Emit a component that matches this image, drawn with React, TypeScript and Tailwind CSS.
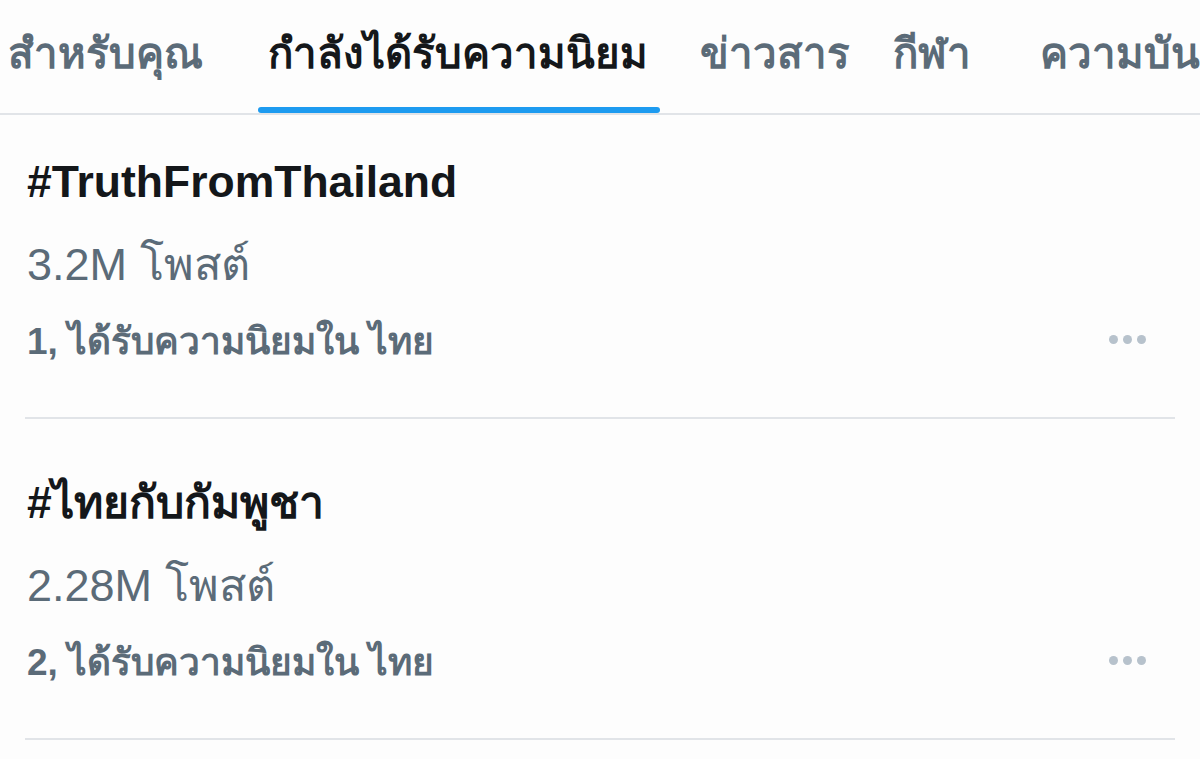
const tabs = [
  { label: 'สำหรับคุณ', active: false, box: 'w-[258px] pl-[8px]' },
  { label: 'กำลังได้รับความนิยม', active: true, box: 'w-[402px] pl-[10px]' },
  { label: 'ข่าวสาร', active: false, box: 'w-[233px] pl-[40px]' },
  { label: 'กีฬา', active: false, box: 'w-[147px]' },
  { label: 'ความบันเทิง', active: false, box: 'w-[200px]' },
];

const trends = [
  { rank: 1, tag: '#TruthFromThailand', count: '3.2M' },
  { rank: 2, tag: '#ไทยกับกัมพูชา', count: '2.28M' },
];

function MoreDots() {
  return (
    <div className="flex items-center gap-[5px]">
      <span className="h-[9px] w-[9px] rounded-full bg-[#b7c2cc]" />
      <span className="h-[9px] w-[9px] rounded-full bg-[#b7c2cc]" />
      <span className="h-[9px] w-[9px] rounded-full bg-[#b7c2cc]" />
    </div>
  );
}

export default function App() {
  return (
    <div className="h-[759px] w-[1200px] overflow-hidden bg-[#fdfdfd] font-['Liberation_Sans','Noto_Sans',sans-serif]">
      <nav className="flex h-[115px] items-stretch overflow-hidden whitespace-nowrap border-b-2 border-[#e1e4e8]">
        {tabs.map((t) => (
          <div key={t.label} className={`flex shrink-0 flex-col justify-between ${t.box}`}>
            <div
              className={`pt-[30px] text-[42px] font-bold leading-[48px] ${
                t.active ? 'text-[#14171a]' : 'text-[#5b6b78]'
              }`}
            >
              {t.label}
            </div>
            <div className={`-ml-[10px] h-[6px] w-[402px] rounded-full ${t.active ? 'bg-[#1d9bf0]' : 'bg-transparent'}`} />
          </div>
        ))}
      </nav>

      <div className="px-[25px]">
        {trends.map((tr, i) => (
          <div
            key={tr.tag}
            className={`flex flex-col border-b-2 border-[#e1e4e8] pb-[53px] ${i === 0 ? 'pt-[41px]' : 'pt-[58px]'}`}
          >
            <div className="pl-[2px] text-[44.5px] font-bold leading-[52px] text-[#14171a]">{tr.tag}</div>
            <div className="mt-[31px] pl-[2px] text-[45px] leading-[52px] text-[#5b6b78]">{tr.count} โพสต์</div>
            <div className="mt-[29px] flex items-center justify-between pl-[2px]">
              <div className="text-[37px] font-bold leading-[44px] text-[#5b6b78]">
                {tr.rank}, ได้รับความนิยมใน ไทย
              </div>
              <div className="mb-[6px] mr-[29px]">
                <MoreDots />
              </div>
            </div>
          </div>
        ))}
      </div>
    </div>
  );
}
